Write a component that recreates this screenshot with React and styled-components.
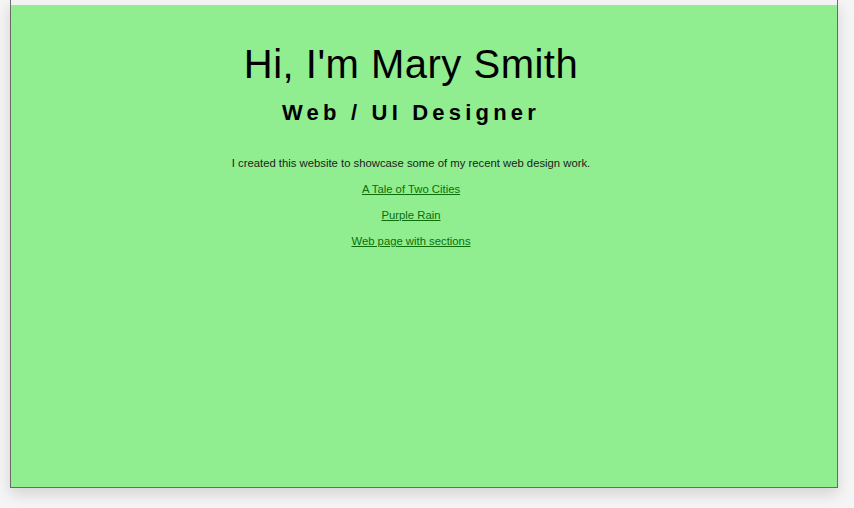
import React from 'react';
import styled, { createGlobalStyle } from 'styled-components';

const GlobalStyle = createGlobalStyle`
	html, body {
		margin: 0;
		padding: 0;
		background: #ffffff;
	}
`

const Page = styled.div`
	width: 854px;
	height: 508px;
	background: #f5f5f5;
	overflow: hidden;
`

const Window = styled.div`
	margin-left: 10px;
	width: 828px;
	height: 488px;
	box-sizing: border-box;
	display: flex;
	flex-direction: column;
	border: 1px solid #6a6a6a;
	border-top: none;
	box-shadow: 0 6px 14px rgba(0, 0, 0, 0.14);
`

const Chrome = styled.div`
	height: 5px;
	background: #f2f2f2;
	border-bottom: 1px solid #c8c8c8;
`

const Content = styled.main`
	flex: 1;
	background: #90ee90;
	display: flex;
	flex-direction: column;
	align-items: center;
	padding: 35px 26px 0 0;
	font-family: "Liberation Sans", Arial, sans-serif;
	color: #000;
`

const Title = styled.h1`
	margin: 0;
	font-size: 40px;
	font-weight: 400;
	line-height: 46px;
	letter-spacing: 0.5px;
`

const Subtitle = styled.h2`
	margin: 13px 0 0;
	font-size: 22px;
	font-weight: 700;
	line-height: 26px;
	letter-spacing: 4.2px;
`

const Intro = styled.p`
	margin: 30px 0 0;
	font-size: 11.3px;
	line-height: 14px;
	color: #1c1c1c;
`

const Links = styled.div`
	display: flex;
	flex-direction: column;
	align-items: center;
	gap: 12px;
	margin-top: 12px;
`

const Link = styled.a`
	font-size: 11.3px;
	line-height: 14px;
	color: #0a6e0a;
	text-decoration: underline;
`

const App = () => {
	return(
		<Page>
			<GlobalStyle />
			<Window>
				<Chrome />
				<Content>
					<Title>Hi, I'm Mary Smith</Title>
					<Subtitle>Web / UI Designer</Subtitle>
					<Intro>I created this website to showcase some of my recent web design work.</Intro>
					<Links>
						<Link href="#">A Tale of Two Cities</Link>
						<Link href="#">Purple Rain</Link>
						<Link href="#">Web page with sections</Link>
					</Links>
				</Content>
			</Window>
		</Page>
	)
}

export default App
